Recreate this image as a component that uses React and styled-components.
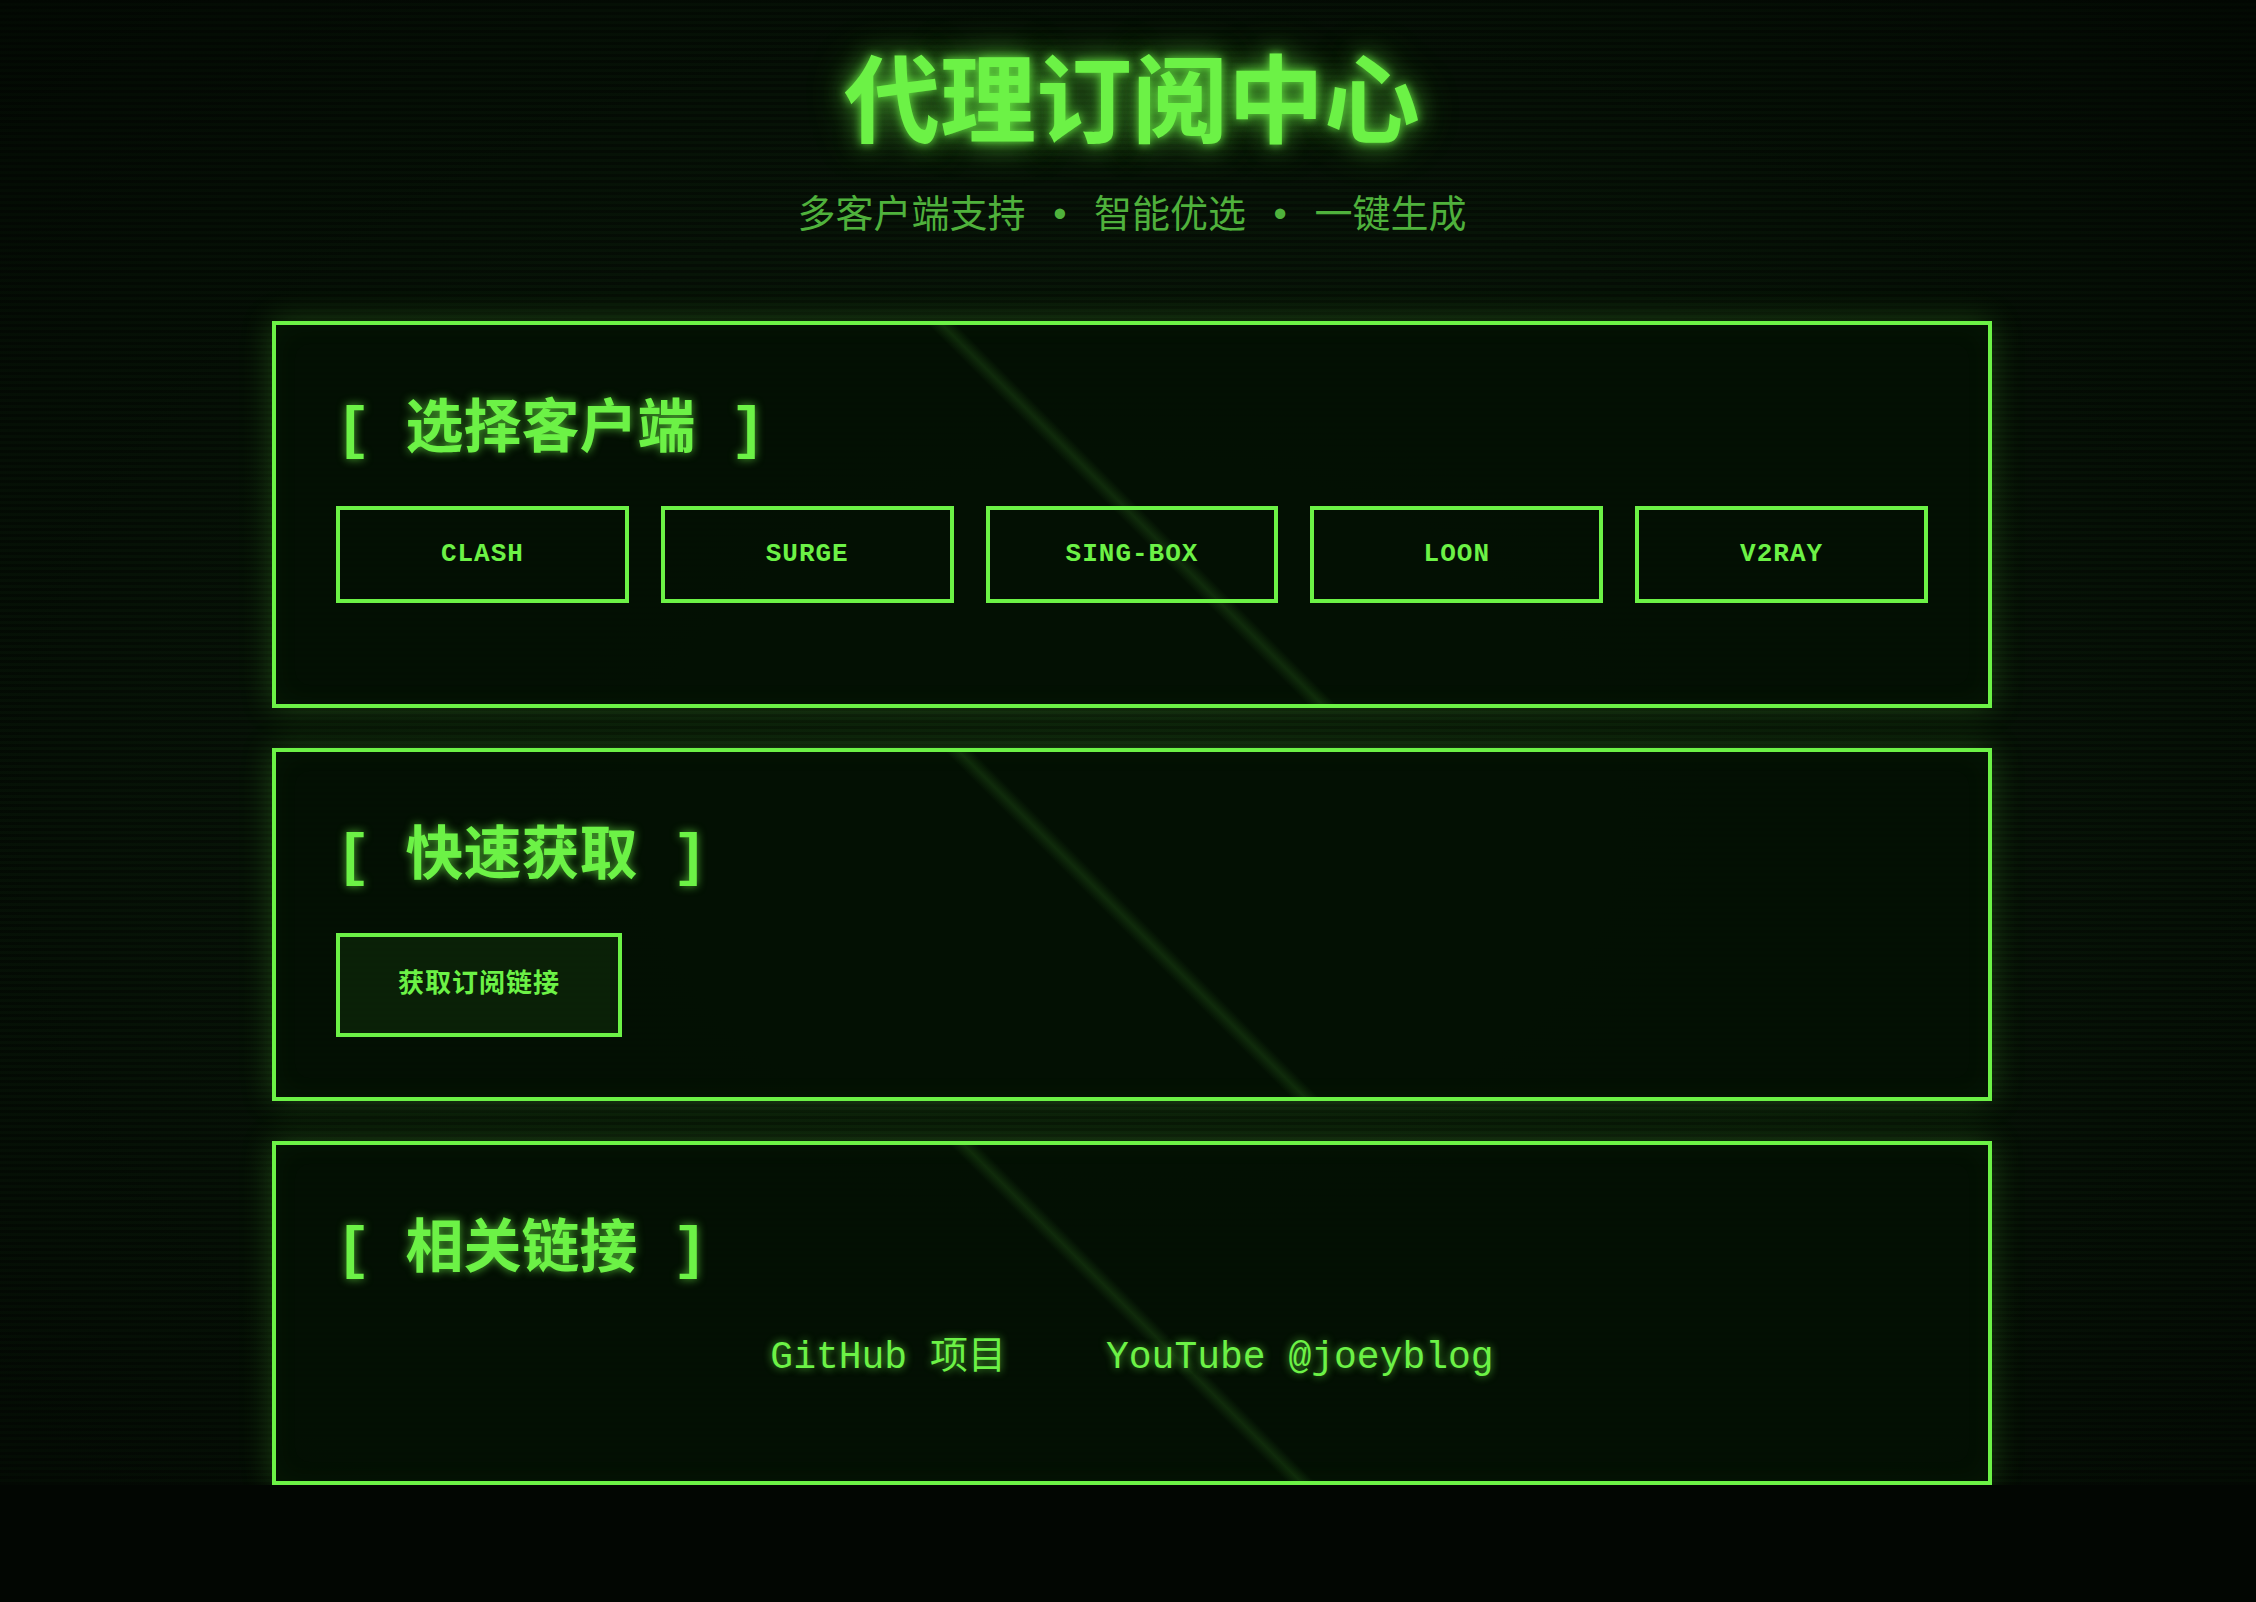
import React from 'react';
import styled, { createGlobalStyle } from 'styled-components';

const GREEN = '#6cf246';
const FONT = `"Liberation Mono", "Noto Sans CJK SC", monospace`;

const GlobalStyle = createGlobalStyle`
  html {
    background: #020602;
  }
  body {
    margin: 0;
    font-family: ${FONT};
    color: ${GREEN};
  }
`;

const Page = styled.div`
  padding: 52px 0 0 8px;
  background:
    repeating-linear-gradient(180deg, rgba(0, 0, 0, 0.35) 0 3px, transparent 3px 6px),
    radial-gradient(ellipse at 50% 55%, #0b1d0a 0%, #071407 55%, #030a03 100%);
`;

const Header = styled.header`
  text-align: center;
  margin-bottom: 81px;
`;

const Title = styled.h1`
  margin: 0;
  font-size: 96px;
  line-height: 116px;
  font-weight: 700;
  color: ${GREEN};
  text-shadow:
    0 0 10px rgba(108, 242, 70, 0.85),
    0 0 24px rgba(108, 242, 70, 0.6),
    0 0 44px rgba(108, 242, 70, 0.4);
`;

const Subtitle = styled.p`
  margin: 26px 0 0;
  font-size: 38px;
  line-height: 46px;
  color: #4fb13c;
`;

const Card = styled.section`
  box-sizing: border-box;
  max-width: 1720px;
  margin: 0 auto ${({ $last }) => ($last ? '0' : '40px')};
  padding: 60px;
  border: 4px solid ${GREEN};
  background:
    linear-gradient(45deg, transparent 49.3%, rgba(108, 242, 70, 0.12) 50%, transparent 50.7%),
    rgba(3, 16, 3, 0.94);
  box-shadow:
    0 0 30px rgba(108, 242, 70, 0.22),
    inset 0 0 30px rgba(108, 242, 70, 0.04);
`;

const SectionTitle = styled.h2`
  margin: 0 0 27px;
  font-size: 58px;
  line-height: 94px;
  font-weight: 700;
  white-space: pre;
  color: ${GREEN};
  text-shadow: 0 0 10px rgba(108, 242, 70, 0.7);
`;

const ClientGrid = styled.div`
  display: grid;
  grid-template-columns: repeat(5, 1fr);
  gap: 32px;
  margin-bottom: 41px;
`;

const ClientButton = styled.button`
  padding: 29px 0;
  border: 4px solid ${GREEN};
  background: transparent;
  color: ${GREEN};
  font-family: ${FONT};
  font-size: 26px;
  font-weight: 700;
  line-height: 31px;
  letter-spacing: 1px;
  text-transform: uppercase;
  cursor: pointer;
`;

const GetButton = styled.button`
  padding: 29px 58px;
  border: 4px solid ${GREEN};
  background: rgba(108, 242, 70, 0.08);
  color: ${GREEN};
  font-family: ${FONT};
  font-size: 26px;
  font-weight: 700;
  line-height: 38px;
  letter-spacing: 1px;
  cursor: pointer;
`;

const Links = styled.div`
  display: flex;
  justify-content: center;
  gap: 48px;
  padding-bottom: 31px;
`;

const LinkItem = styled.a`
  padding: 10px 26px;
  font-size: 38px;
  line-height: 44px;
  color: ${GREEN};
  text-decoration: none;
  text-shadow: 0 0 8px rgba(108, 242, 70, 0.7);
`;

const clients = ['clash', 'surge', 'sing-box', 'loon', 'v2ray'];

export default function App() {
  return (
    <>
      <GlobalStyle />
      <Page>
        <Header>
          <Title>代理订阅中心</Title>
          <Subtitle>多客户端支持 • 智能优选 • 一键生成</Subtitle>
        </Header>

        <Card>
          <SectionTitle>[ 选择客户端 ]</SectionTitle>
          <ClientGrid>
            {clients.map((c) => (
              <ClientButton key={c}>{c}</ClientButton>
            ))}
          </ClientGrid>
        </Card>

        <Card>
          <SectionTitle>[ 快速获取 ]</SectionTitle>
          <GetButton>获取订阅链接</GetButton>
        </Card>

        <Card $last>
          <SectionTitle>[ 相关链接 ]</SectionTitle>
          <Links>
            <LinkItem href="#">GitHub 项目</LinkItem>
            <LinkItem href="#">YouTube @joeyblog</LinkItem>
          </Links>
        </Card>
      </Page>
    </>
  );
}
